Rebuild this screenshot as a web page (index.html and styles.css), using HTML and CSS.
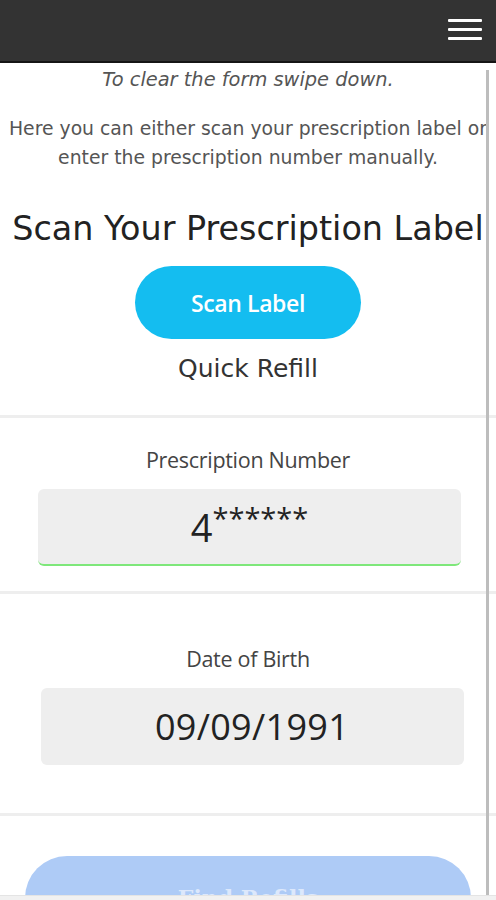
FILE: index.html
```html
<!DOCTYPE html>
<html>
<head>
<meta charset="utf-8">
<link rel="stylesheet" href="styles.css">
</head>
<body>
<header class="topbar">
  <button class="menu" aria-label="Menu">
    <span class="bar"></span><span class="bar"></span><span class="bar"></span>
  </button>
</header>
<main class="content">
  <p class="hint">To clear the form swipe down.</p>
  <p class="intro">Here you can either scan your prescription label or<br>enter the prescription number manually.</p>
  <h1 class="title">Scan Your Prescription Label</h1>
  <div class="scan-row"><button class="scan-btn">Scan Label</button></div>
  <h2 class="subtitle">Quick Refill</h2>
  <section class="field first">
    <label class="label">Prescription Number</label>
    <div class="input active"><span class="num">4</span><span class="stars">******</span></div>
  </section>
  <section class="field second">
    <label class="label">Date of Birth</label>
    <div class="input dob">09/09/1991</div>
  </section>
  <section class="actions">
    <button class="find-btn">Find Refills</button>
  </section>
</main>
<div class="scrollbar"></div>
<div class="bottom-strip"></div>
</body>
</html>
```
FILE: styles.css
```css
* { box-sizing: border-box; }
html, body { margin: 0; padding: 0; }
body {
  width: 496px;
  height: 900px;
  overflow: hidden;
  background: #fff;
  font-family: "DejaVu Sans", "Open Sans", sans-serif;
  color: #333;
  position: relative;
}
.topbar {
  height: 63px;
  background: #333;
  border-bottom: 2px solid #151515;
  display: flex;
  justify-content: flex-end;
  align-items: flex-start;
  padding: 19px 14px 0 0;
}
.menu {
  background: none;
  border: 0;
  padding: 0;
  width: 34px;
  display: flex;
  flex-direction: column;
  gap: 6px;
}
.bar {
  display: block;
  height: 3px;
  width: 34px;
  background: #fff;
  border-radius: 1px;
}
.content {
  display: flex;
  flex-direction: column;
  align-items: center;
  text-align: center;
  overflow: hidden;
}
.hint {
  margin: 5px 0 0;
  font-style: italic;
  font-size: 19.4px;
  line-height: 24px;
  color: #555;
}
.intro {
  margin: 22px 0 0;
  font-size: 18.8px;
  line-height: 29px;
  color: #555;
  width: 496px;
  white-space: nowrap;
}
.title {
  margin: 37px 0 0;
  font-weight: 400;
  font-size: 33.4px;
  line-height: 40px;
  color: #222;
  white-space: nowrap;
}
.scan-row { margin-top: 17px; }
.scan-btn {
  width: 226px;
  height: 73px;
  border: 0;
  border-radius: 37px;
  background: #14bdf0;
  color: #fff;
  font-family: "Open Sans", sans-serif;
  font-weight: 600;
  font-size: 23px;
  letter-spacing: -0.4px;
}
.subtitle {
  margin: 13px 0 0;
  font-weight: 400;
  font-size: 25px;
  line-height: 34px;
  color: #333;
}
.field {
  width: 100%;
  border-top: 3px solid #eeeeee;
  display: flex;
  flex-direction: column;
  align-items: center;
}
.first { margin-top: 29px; padding-bottom: 25px; }
.second { padding-bottom: 48px; }
.label {
  font-family: "Open Sans", sans-serif;
  font-size: 21.5px;
  line-height: 24px;
  color: #444;
  font-weight: 500;
  letter-spacing: -0.3px;
}
.first .label { margin-top: 30px; }
.second .label { margin-top: 53px; }
.input {
  width: 423px;
  height: 77px;
  background: #eeeeee;
  border-radius: 6px;
  display: flex;
  align-items: center;
  justify-content: center;
  font-family: "Open Sans", sans-serif;
  color: #222;
}
.first .input { margin-top: 17px; margin-left: 3px; }
.second .input { margin-top: 17px; margin-left: 8px; }
.active { border-bottom: 2px solid #7ee77a; }
.num { font-size: 38px; line-height: 1; }
.stars { font-size: 29px; line-height: 1; margin-top: -18px; }
.dob { font-size: 36px; letter-spacing: 0.3px; }
.actions {
  width: 100%;
  border-top: 3px solid #eeeeee;
  display: flex;
  justify-content: center;
  padding-top: 40px;
}
.find-btn {
  width: 446px;
  height: 84px;
  border: 0;
  border-radius: 42px;
  background: #aecbf6;
  color: #dce8fc;
  font-family: "DejaVu Serif", serif;
  font-weight: 700;
  font-size: 22px;
}
.scrollbar {
  position: absolute;
  left: 486px;
  top: 70px;
  width: 3px;
  height: 825px;
  background: #bdbdbd;
}
.bottom-strip {
  position: absolute;
  left: 0;
  bottom: 0;
  width: 496px;
  height: 5px;
  background: #f1f1f1;
  border-top: 1px solid #e4e4e4;
}
```
